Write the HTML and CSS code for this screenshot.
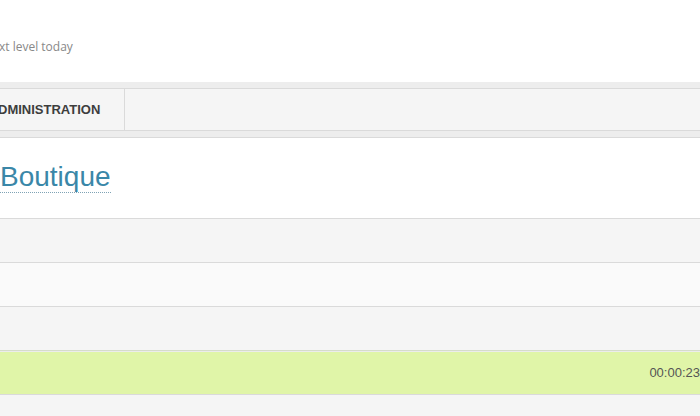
FILE: index.html
```html
<!DOCTYPE html>
<html>
<head>
<meta charset="utf-8">
<link rel="stylesheet" href="styles.css">
</head>
<body>
<div class="page">
  <div class="intro"><p class="tagline">xt level today</p></div>
  <div class="nav-wrap">
    <nav class="nav">
      <a class="nav-item">DMINISTRATION</a>
      <div class="nav-rest"></div>
    </nav>
  </div>
  <div class="title-block">
    <h1 class="title"><a class="title-link">Boutique</a></h1>
  </div>
  <div class="rows">
    <div class="row row-a"></div>
    <div class="row row-b"></div>
    <div class="row row-a"></div>
    <div class="row row-green"><span class="time">00:00:23</span></div>
    <div class="row row-a row-last"></div>
  </div>
</div>
</body>
</html>
```
FILE: styles.css
```css
html, body {
  margin: 0;
  padding: 0;
  background: #ffffff;
}
.page {
  width: 700px;
  height: 416px;
  overflow: hidden;
  font-family: "Liberation Sans", Arial, sans-serif;
}
.intro {
  height: 82px;
  display: flex;
  align-items: flex-start;
}
.tagline {
  margin: 38px 0 0 -1px;
  font-family: "Open Sans", sans-serif;
  font-size: 12px;
  color: #888888;
  line-height: 18px;
}
.nav-wrap {
  background: #ededed;
  padding: 6px 0 6px;
  border-bottom: 1px solid #dadada;
}
.nav {
  display: flex;
  height: 41px;
  background: #f5f5f5;
  border-top: 1px solid #dadada;
  border-bottom: 1px solid #dadada;
}
.nav-item {
  display: flex;
  align-items: center;
  margin-left: -2px;
  padding: 0 24px 0 0;
  font-weight: bold;
  font-size: 13px;
  color: #3d3d3d;
  border-right: 1px solid #dadada;
}
.nav-rest {
  flex: 1;
}
.title-block {
  height: 80px;
  padding-top: 25px;
  box-sizing: border-box;
}
.title {
  margin: 0;
  font-weight: normal;
  font-size: 28px;
  line-height: 28px;
}
.title-link {
  color: #3a87a8;
  border-bottom: 1px dotted #7fa3b5;
  padding-bottom: 1px;
  display: inline-block;
  line-height: 28px;
}
.rows {
  display: flex;
  flex-direction: column;
}
.row {
  height: 43px;
  border-top: 1px solid #dadada;
  display: flex;
  align-items: center;
  justify-content: flex-end;
}
.row-a {
  background: #f5f5f5;
}
.row-b {
  background: #fafafa;
}
.row-green {
  background: #e0f5a8;
  border-top: 1px solid #d6dccb;
  box-shadow: inset 0 1px 0 #ececec;
}
.row-last {
  height: 30px;
}
.time {
  font-size: 13px;
  color: #555555;
  margin-right: 0;
}
```
